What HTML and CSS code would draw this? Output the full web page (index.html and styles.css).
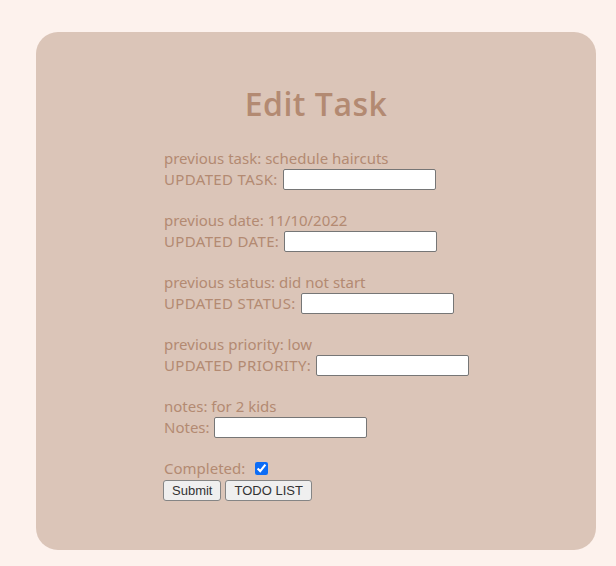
FILE: index.html
```html
<!DOCTYPE html>
<html>
<head>
<meta charset="utf-8">
<link rel="stylesheet" href="styles.css">
</head>
<body>
<div class="card">
  <h1 class="title">Edit Task</h1>
  <form class="form">
    <div class="group">
      <div class="line">previous task: schedule haircuts</div>
      <div class="line"><span class="caps">UPDATED TASK: </span><input type="text" class="field"></div>
    </div>
    <div class="group">
      <div class="line">previous date: 11/10/2022</div>
      <div class="line"><span class="caps">UPDATED DATE: </span><input type="text" class="field"></div>
    </div>
    <div class="group">
      <div class="line">previous status: did not start</div>
      <div class="line"><span class="caps">UPDATED STATUS: </span><input type="text" class="field"></div>
    </div>
    <div class="group">
      <div class="line">previous priority: low</div>
      <div class="line"><span class="caps">UPDATED PRIORITY: </span><input type="text" class="field"></div>
    </div>
    <div class="group">
      <div class="line">notes: for 2 kids</div>
      <div class="line">Notes: <input type="text" class="field"></div>
    </div>
    <div class="line">Completed: <input type="checkbox" class="check" checked></div>
    <div class="buttons">
      <button type="button" class="btn">Submit</button>
      <button type="button" class="btn">TODO LIST</button>
    </div>
  </form>
</div>
</body>
</html>
```
FILE: styles.css
```css
html, body {
  margin: 0;
  padding: 0;
  background: #fdf2ed;
}
body {
  padding: 32px 20px 16px 36px;
}
.card {
  width: 560px;
  height: 518px;
  box-sizing: border-box;
  background: #dbc5b8;
  border-radius: 22px;
  padding: 52px 0 0 128px;
}
.title {
  margin: 0 0 24px -128px;
  text-align: center;
  font-family: "Open Sans", "Noto Sans", sans-serif;
  font-weight: 600;
  font-size: 32px;
  line-height: 40px;
  letter-spacing: 0.5px;
  color: #b38a72;
}
.form {
  font-family: "Noto Sans", sans-serif;
  font-size: 15px;
  color: #b38a72;
}
.group {
  margin-bottom: 20px;
}
.line {
  height: 21px;
  line-height: 21px;
  display: flex;
  align-items: center;
  white-space: pre;
}
.caps {
  letter-spacing: 0.35px;
}
.field {
  width: 153px;
  height: 21px;
  box-sizing: border-box;
  margin: 0 0 0 1px;
  border: 1px solid #767676;
  border-radius: 2px;
  background: #fff;
  padding: 0 3px;
}
.check {
  width: 13px;
  height: 13px;
  margin: 0 0 0 6px;
  accent-color: #0b6cf6;
}
.buttons {
  display: flex;
  gap: 4px;
  margin-top: 1px;
  margin-left: -1px;
}
.btn {
  font-family: "Liberation Sans", Arial, sans-serif;
  font-size: 13px;
  height: 21px;
  padding: 0 8px;
  background: #efefef;
  color: #333;
  border: 1px solid #858585;
  border-radius: 3px;
}
```
